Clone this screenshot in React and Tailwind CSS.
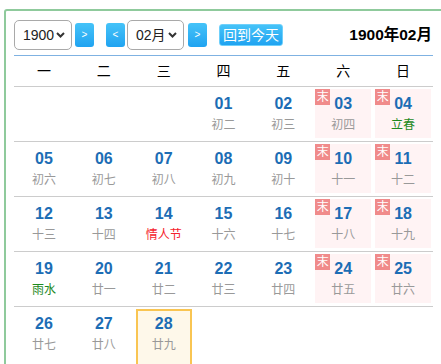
const weekdays = ["一", "二", "三", "四", "五", "六", "日"];

const days = [
  null, null, null,
  { d: "01", l: "初二" }, { d: "02", l: "初三" }, { d: "03", l: "初四" }, { d: "04", l: "立春", c: "text-[#1e8a1e]" },
  { d: "05", l: "初六" }, { d: "06", l: "初七" }, { d: "07", l: "初八" }, { d: "08", l: "初九" }, { d: "09", l: "初十" }, { d: "10", l: "十一" }, { d: "11", l: "十二" },
  { d: "12", l: "十三" }, { d: "13", l: "十四" }, { d: "14", l: "情人节", c: "text-[#f5222d]" }, { d: "15", l: "十六" }, { d: "16", l: "十七" }, { d: "17", l: "十八" }, { d: "18", l: "十九" },
  { d: "19", l: "雨水", c: "text-[#1e8a1e]" }, { d: "20", l: "廿一" }, { d: "21", l: "廿二" }, { d: "22", l: "廿三" }, { d: "23", l: "廿四" }, { d: "24", l: "廿五" }, { d: "25", l: "廿六" },
  { d: "26", l: "廿七" }, { d: "27", l: "廿八" }, { d: "28", l: "廿九", today: true }, null, null, null, null,
];

function Chevron() {
  return (
    <svg width="9" height="6" viewBox="0 0 9 6" className="shrink-0">
      <path d="M1 1l3.5 3.5L8 1" fill="none" stroke="#333" strokeWidth="2" />
    </svg>
  );
}

function Select({ value, w }) {
  return (
    <div className={`${w} h-[30px] flex items-center justify-between pl-[8px] pr-[6px] border border-[#a9a9a9] rounded-[5px] bg-white text-[14px] text-[#222]`}>
      <span>{value}</span>
      <Chevron />
    </div>
  );
}

function ArrowBtn({ label }) {
  return (
    <div className="w-[19px] h-[24px] flex items-center justify-center rounded-[3px] bg-gradient-to-b from-[#45c3f8] to-[#1fa3f1] text-white text-[10px] leading-none">
      {label}
    </div>
  );
}

function DayCell({ item, col, last }) {
  const rowCls = last ? "h-[62px]" : "h-[55px] border-b border-[#cccccc]";
  if (!item) return <div className={rowCls} />;
  const weekend = col >= 5;
  return (
    <div className={`${rowCls} p-[2px] ${last ? "pb-0" : "pb-[3px]"}`}>
      <div
        className={`relative h-full flex flex-col items-center ${
          weekend ? "bg-[#fff3f4]" : ""
        } ${item.today ? "border-2 border-[#f9c552] bg-[#fef8ea] pt-[2px]" : "pt-[4px]"}`}
      >
        {weekend && (
          <span className="absolute left-0 top-0 w-[15px] h-[16px] flex items-center justify-center bg-[#f08b8b] text-white text-[12px] leading-none">
            末
          </span>
        )}
        <span className="text-[16px] font-bold text-[#1c6db5] leading-[22px]">{item.d}</span>
        <span className={`mt-[1px] text-[12px] leading-[18px] ${item.c || "text-[#999999]"}`}>{item.l}</span>
      </div>
    </div>
  );
}

export default function App() {
  return (
    <div className="w-[441px] h-[364px] overflow-hidden bg-white pt-[9px] pl-[4px]" style={{ fontFamily: '"Liberation Sans", "Noto Sans CJK SC", sans-serif' }}>
      <div className="w-[460px] h-[400px] border-2 border-[#8fca9c] rounded-tl-[3px] pt-[9px] pl-[8px]">
        <div className="w-[419px]">
          {/* Header */}
          <div className="flex items-center h-[30px]">
            <Select value="1900" w="w-[58px]" />
            <div className="ml-[3px]"><ArrowBtn label="&gt;" /></div>
            <div className="ml-[12px]"><ArrowBtn label="&lt;" /></div>
            <div className="ml-[2px]"><Select value="02月" w="w-[57px]" /></div>
            <div className="ml-[4px]"><ArrowBtn label="&gt;" /></div>
            <div className="ml-[12px] h-[22px] w-[64px] flex items-center justify-center rounded-[3px] border border-[#6fd0fb] bg-gradient-to-b from-[#45c3f8] to-[#1fa3f1] text-white text-[14px]">
              回到今天
            </div>
            <div className="ml-auto pr-[1px] text-[15.5px] font-bold text-black">1900年02月</div>
          </div>
          <div className="mt-[5px] border-b border-[#7fb2e2]" />
          {/* Weekdays */}
          <div className="grid grid-cols-7 h-[31px] border-b border-[#cccccc]">
            {weekdays.map((w) => (
              <div key={w} className="flex items-center justify-center text-[14px] text-black">{w}</div>
            ))}
          </div>
          <div className="grid grid-cols-7">
            {days.map((item, i) => (
              <DayCell key={i} item={item} col={i % 7} last={i >= 28} />
            ))}
          </div>
        </div>
      </div>
    </div>
  );
}
